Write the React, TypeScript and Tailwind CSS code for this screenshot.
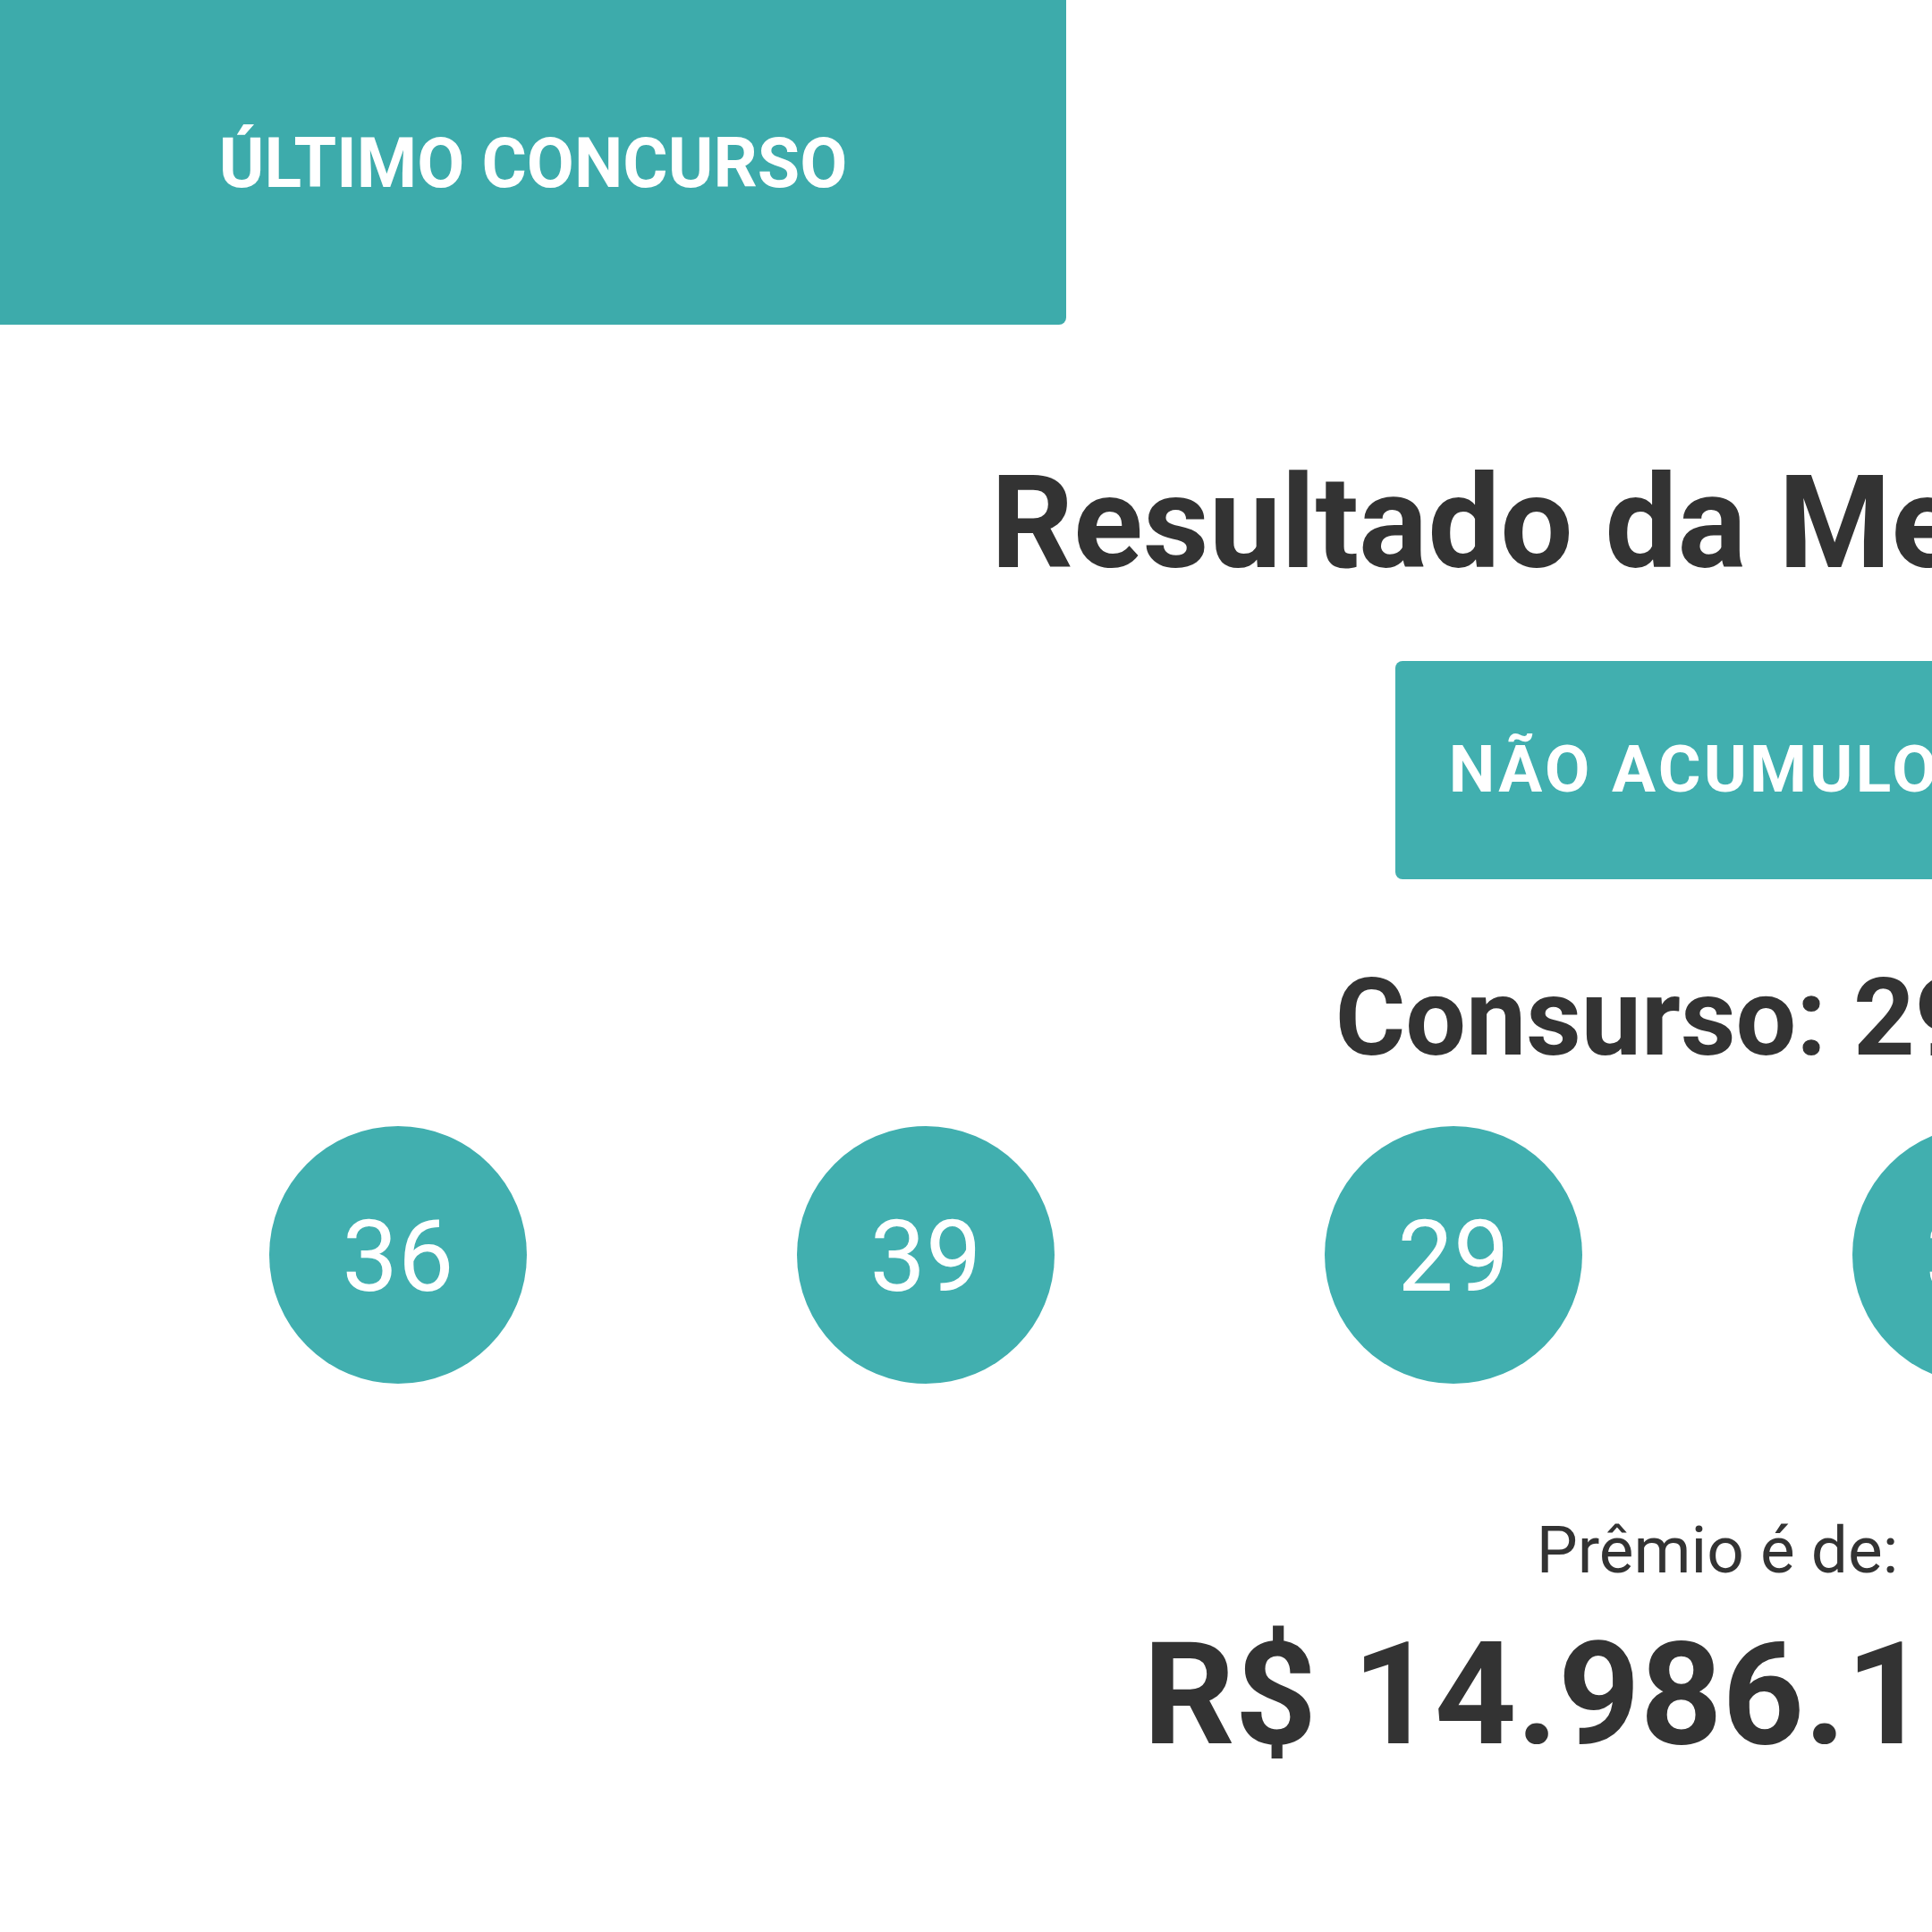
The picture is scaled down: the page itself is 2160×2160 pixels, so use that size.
import React from "react";

const balls = ["36", "39", "29", "31", "12", "47"];

export default function App() {
  return (
    <div className="w-[2160px] h-[2160px] overflow-hidden bg-white font-['Roboto',sans-serif] text-[#333333]">
      <div className="w-[3840px]">
        <div className="flex">
          <div className="w-[1192px] h-[363px] bg-[#3dabab] rounded-br-[8px] flex items-center justify-center">
            <span className="pt-[4px] text-[77px] font-bold text-white">ÚLTIMO CONCURSO</span>
          </div>
        </div>
        <div className="flex flex-col items-center">
          <h1 className="mt-[150px] text-[144px] leading-none font-bold">Resultado da Mega-Sena</h1>
          <div className="mt-[82px] w-[720px] h-[244px] bg-[#41afaf] rounded-[8px] flex items-center justify-center">
            <span className="text-[73px] font-bold text-white tracking-[0.045em]">NÃO ACUMULOU</span>
          </div>
          <h2 className="mt-[95px] text-[120px] leading-none font-bold">Consurso: 2950</h2>
          <div className="mt-[61px] flex gap-[302px]">
            {balls.map((n) => (
              <div
                key={n}
                className="w-[288px] h-[288px] rounded-full bg-[#41afaf] flex items-center justify-center"
              >
                <span className="pt-[4px] text-[111px] text-white">{n}</span>
              </div>
            ))}
          </div>
          <p className="mt-[150px] text-[73px] leading-none">Prêmio é de:</p>
          <p className="mt-[45px] text-[160px] leading-none font-bold">R$ 14.986.119,25</p>
        </div>
      </div>
    </div>
  );
}
